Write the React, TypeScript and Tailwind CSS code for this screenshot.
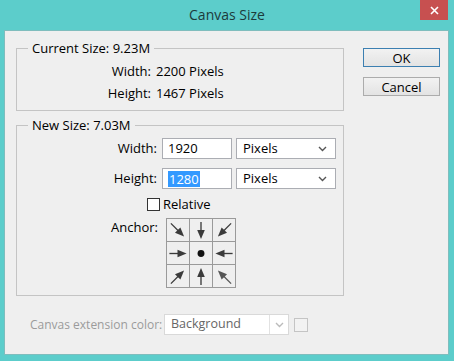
import React from 'react';

const font = { fontFamily: '"Segoe UI", "Open Sans", "Liberation Sans", Arial, sans-serif' };

// one cell of the anchor picker; the arrow is drawn pointing right, then rotated
const Arrow = ({ angle, faded }: { angle: number; faded?: boolean }) => (
  <svg width="23" height="23" viewBox="0 0 23 23">
    <g transform={`rotate(${angle} 11.5 11.5)`} fill={faded ? '#555' : '#3b3b3b'} stroke={faded ? '#555' : '#3b3b3b'}>
      <line x1={angle % 90 === 0 ? 2.5 : 1} y1="11.5" x2="13" y2="11.5" strokeWidth="1.4" />
      <polygon points="11,7.5 20.5,11.5 11,15.5" strokeWidth="0" />
    </g>
  </svg>
);

const Dot = () => (
  <svg width="23" height="23" viewBox="0 0 23 23">
    <circle cx="11.5" cy="11.5" r="3.6" fill="#111" />
  </svg>
);

const Chevron = ({ color = '#555' }: { color?: string }) => (
  <svg width="9" height="6" viewBox="0 0 9 6">
    <path d="M1 1 L4.5 4.5 L8 1" fill="none" stroke={color} strokeWidth="1.4" />
  </svg>
);

const UnitSelect = () => (
  <div className="w-[100px] h-[21px] bg-white border border-[#abadb3] flex items-center justify-between pl-[6px] pr-[8px] text-black">
    <span>Pixels</span>
    <Chevron />
  </div>
);

const Group = ({ label, className, children }: { label: string; className?: string; children: React.ReactNode }) => (
  <fieldset className={`border border-[#c4c4c4] ${className ?? ''}`}>
    <legend className="ml-[11px] px-[4px] leading-[14px] text-black">{label}</legend>
    {children}
  </fieldset>
);

const anchors: (number | null)[] = [45, 90, 135, 0, null, 180, -45, -90, -135];

export default function App() {
  return (
    <div className="w-[454px] h-[361px] bg-[#5ccdcb] flex flex-col text-[13px]" style={font}>
      {/* title bar */}
      <div className="relative h-[30px] flex items-center justify-center">
        <span className="text-[14px] text-[#1c3b3b] mt-[-1px]">Canvas Size</span>
        <div className="absolute right-[6px] top-0 w-[28px] h-[20px] bg-[#c75050] flex items-center justify-center">
          <svg width="9" height="9" viewBox="0 0 9 9">
            <path d="M1 1 L8 8 M8 1 L1 8" stroke="#fff" strokeWidth="1.6" />
          </svg>
        </div>
      </div>

      {/* client area */}
      <div className="ml-[4px] mr-[5px] h-[325px] bg-[#efefef] border border-[#7fbdbd] flex flex-col">
        <div className="flex pl-[11px] pt-[10px]">
          <div className="w-[328px] flex flex-col">
            <Group label="Current Size: 9.23M" className="h-[70px] pt-[9px]">
              <div className="flex flex-col gap-[8px] leading-[14px] text-black">
                <div className="flex"><span className="w-[134px] text-right">Width:</span><span className="ml-[5px]">2200 Pixels</span></div>
                <div className="flex"><span className="w-[134px] text-right">Height:</span><span className="ml-[5px]">1467 Pixels</span></div>
              </div>
            </Group>

            <Group label="New Size: 7.03M" className="mt-[7px] h-[178px] pt-[6px]">
              <div className="flex flex-col text-black">
                <div className="flex items-center h-[21px]">
                  <span className="w-[140px] text-right">Width:</span>
                  <div className="ml-[5px] w-[70px] h-[21px] bg-white border border-[#abadb3] flex items-center pl-[5px]">1920</div>
                  <div className="ml-[4px]"><UnitSelect /></div>
                </div>
                <div className="flex items-center h-[21px] mt-[9px]">
                  <span className="w-[140px] text-right">Height:</span>
                  <div className="ml-[5px] w-[70px] h-[21px] bg-white border border-[#abadb3] flex items-center pl-[5px]">
                    <span className="bg-[#3399ff] text-white px-[1px] leading-[16px]">1280</span>
                  </div>
                  <div className="ml-[4px]"><UnitSelect /></div>
                </div>
                <div className="flex items-center mt-[7px] ml-[130px] h-[17px]">
                  <span className="w-[13px] h-[13px] bg-white border border-[#333]" />
                  <span className="ml-[3px]">Relative</span>
                </div>
                <div className="flex mt-[5px]">
                  <span className="w-[141px] text-right">Anchor:</span>
                  <div className="ml-[8px] grid grid-cols-3 border-l border-t border-[#9a9a9a] w-[70px]">
                    {anchors.map((a, i) => (
                      <div key={i} className="border-r border-b border-[#9a9a9a] w-[23px] h-[23px] flex items-center justify-center">
                        {a === null ? <Dot /> : <Arrow angle={a} faded={i === 8} />}
                      </div>
                    ))}
                  </div>
                </div>
              </div>
            </Group>
          </div>

          <div className="ml-[19px] mt-[7px] flex flex-col gap-[10px] text-black">
            <button className="w-[77px] h-[19px] border border-[#3c7fb1] bg-gradient-to-b from-[#f2f2f2] to-[#e3e3e3] leading-[16px]">OK</button>
            <button className="w-[77px] h-[19px] border border-[#acacac] bg-gradient-to-b from-[#f2f2f2] to-[#e3e3e3] leading-[16px]">Cancel</button>
          </div>
        </div>

        {/* extension colour row */}
        <div className="flex items-center mt-[18px] pl-[25px] text-[12px]">
          <span className="text-[#9b9b9b] w-[134px]">Canvas extension color:</span>
          <div className="w-[125px] h-[21px] bg-white border border-[#d9d9d9] flex items-center">
            <span className="flex-1 pl-[6px] text-[#666] text-[12.5px]">Background</span>
            <div className="w-[19px] h-full border-l border-[#e2e2e2] flex items-center justify-center">
              <Chevron color="#bbb" />
            </div>
          </div>
          <span className="ml-[5px] w-[14px] h-[14px] border border-[#c4c4c4] bg-[#f2f2f2]" />
        </div>
      </div>
    </div>
  );
}
